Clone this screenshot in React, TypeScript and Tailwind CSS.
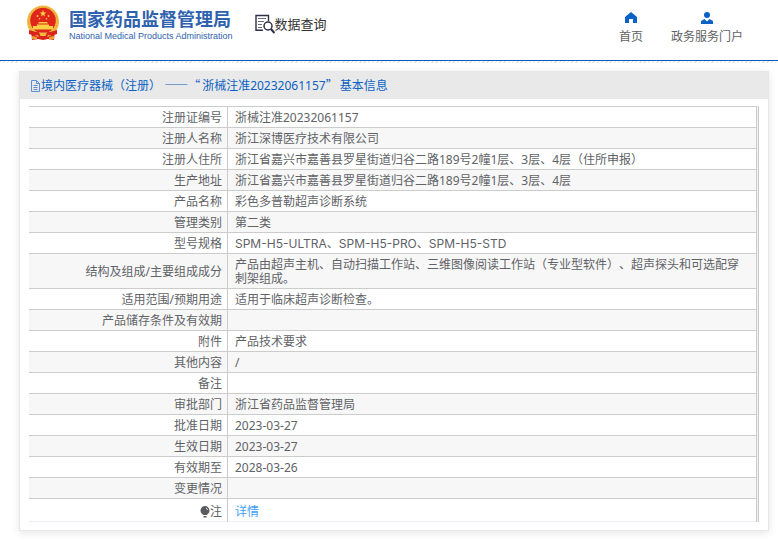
type Row = { label: string; value: string; latin?: boolean };

const rows: Row[] = [
    { label: "注册证编号", value: "浙械注准20232061157" },
    { label: "注册人名称", value: "浙江深博医疗技术有限公司" },
    { label: "注册人住所", value: "浙江省嘉兴市嘉善县罗星街道归谷二路189号2幢1层、3层、4层（住所申报）" },
    { label: "生产地址", value: "浙江省嘉兴市嘉善县罗星街道归谷二路189号2幢1层、3层、4层" },
    { label: "产品名称", value: "彩色多普勒超声诊断系统" },
    { label: "管理类别", value: "第二类" },
    { label: "型号规格", value: "SPM-H5-ULTRA、SPM-H5-PRO、SPM-H5-STD", latin: true },
    { label: "结构及组成/主要组成成分", value: "产品由超声主机、自动扫描工作站、三维图像阅读工作站（专业型软件）、超声探头和可选配穿刺架组成。" },
    { label: "适用范围/预期用途", value: "适用于临床超声诊断检查。" },
    { label: "产品储存条件及有效期", value: "" },
    { label: "附件", value: "产品技术要求" },
    { label: "其他内容", value: "/" },
    { label: "备注", value: "" },
    { label: "审批部门", value: "浙江省药品监督管理局" },
    { label: "批准日期", value: "2023-03-27" },
    { label: "生效日期", value: "2023-03-27" },
    { label: "有效期至", value: "2028-03-26" },
    { label: "变更情况", value: "" },
];

const Emblem = () => (
    <svg viewBox="0 0 34 36" className="mt-[5px] h-9 w-[34px] shrink-0" aria-hidden="true">
        <path d="M5 25h24l-1 10-6-1-5 1-5-1-6 1z" fill="#d9231c" />
        <circle cx="17" cy="16.500" r="16" fill="#f0bb40" />
        <circle cx="17" cy="16.500" r="14.500" fill="none" stroke="#e9a832" strokeDasharray="2 1.500" />
        <circle cx="17" cy="15.500" r="12.800" fill="#e0251b" />
        <path d="M17 5l.9 2.400h2.500l-2 1.500.7 2.500-2.100-1.400-2.100 1.400.7-2.500-2-1.500h2.500z" fill="#f8cf45" />
        <g fill="#f8cf45">
            <circle cx="11.500" cy="11" r=".9" />
            <circle cx="22.500" cy="11" r=".9" />
            <circle cx="13.500" cy="13.800" r=".8" />
            <circle cx="20.500" cy="13.800" r=".8" />
            <path d="M13 17h8l1 1.500H12zM11 19.500h12V21h4v3.500H7V21h4z" />
        </g>
        <path d="M3 25q14 5 28 0v4q-5 2-9 1l-2 4h-6l-2-4q-4 1-9-1z" fill="#d9231c" />
        <path d="M13 27.500h8l-1.500 3.500h-5z" fill="#f0bb40" />
        <path d="M6 31l5 1v2.500L6 34zM28 31l-5 1v2.500l5-.5z" fill="#e8a030" />
    </svg>
);

const SearchDocIcon = () => (
    <svg viewBox="0 0 20 20" className="size-5 shrink-0" fill="none" stroke="#2d3047" aria-hidden="true">
        <path d="M8 16.300H1V1.500h12.500V7" strokeWidth="1.400" />
        <path d="M3 4.500h8M3 7.500h6M3 10.500h4M3 13.500h4" stroke="#6c6e80" />
        <circle cx="13" cy="12" r="4" strokeWidth="1.500" />
        <path d="M16 15l3.500 4" strokeWidth="2.200" />
    </svg>
);

const DocIcon = () => (
    <svg viewBox="0 0 11 12" className="h-3 w-[11px] shrink-0" fill="none" stroke="#5a8fd6" aria-hidden="true">
        <path d="M1.500.5h5l3 3v8h-8zM6.500.5v3h3M3.500 5.500h4M3.500 7.500h4M3.500 9.500h4" />
    </svg>
);

const BulbIcon = () => (
    <svg viewBox="0 0 10 12" className="h-3 w-2.5" fill="#5a5b60" aria-hidden="true">
        <path d="M5 0a4.500 4.500 0 0 1 3 7.800L6.800 9H3.200L2 7.800A4.500 4.500 0 0 1 5 0zM3.500 10h3v1.500h-3z" />
        <path d="M6 2q1.500.5 1.500 2" fill="none" stroke="#fff" strokeWidth=".8" />
    </svg>
);

const HomeIcon = () => (
    <svg viewBox="0 0 12 12" className="size-3" fill="#0b62c4" aria-hidden="true">
        <path d="M6 0l6 5v6H8V7H4v4H0V5z" />
    </svg>
);

const UserIcon = () => (
    <svg viewBox="0 0 12 12" className="size-3" fill="#0b62c4" aria-hidden="true">
        <circle cx="6" cy="3" r="3" />
        <path d="M0 12V9l3.500-2L6 9.500 8.500 7 12 9v3z" />
    </svg>
);

export default function App() {
    return (
        <div lang="zh-CN" className="font-['Noto_Sans','Noto_Sans_CJK_SC',sans-serif] text-xs text-[#606266] [text-spacing-trim:space-all]">
            <header className="flex h-[61px] items-start justify-between border-b border-[#0a60b8] bg-white pr-[35px] pl-[26px]">
                <div className="flex items-start">
                    <Emblem />
                    <a href="#" className="ml-[9px] block pt-2 text-[#2f62ae]">
                        <div className="text-[18px] leading-[22px] font-bold">国家药品监督管理局</div>
                        <div className="font-['Liberation_Sans',sans-serif] text-[9px] leading-3">National Medical Products Administration</div>
                    </a>
                    <div className="ml-[22px] flex items-center pt-3 text-[13px] leading-6 text-[#333]">
                        <SearchDocIcon />
                        数据查询
                    </div>
                </div>
                <nav className="flex gap-7 pt-3 leading-4">
                    <a href="#" className="flex flex-col items-center gap-[5px]">
                        <HomeIcon />
                        首页
                    </a>
                    <a href="#" className="flex flex-col items-center gap-[5px]">
                        <UserIcon />
                        政务服务门户
                    </a>
                </nav>
            </header>
            <div className="h-0.5 bg-[repeating-linear-gradient(135deg,#e2e2e2_0_1px,#fff_1px_3px)]" />
            <main className="mt-2 mr-[9px] mb-3 ml-[19px] border border-[#e6e7ea] bg-white shadow-[0_2px_8px_rgba(0,0,0,0.1)]">
                <h1 className="flex h-[27px] items-center bg-[#e9e9e9] px-2.5 text-xs text-[#0b62c4]">
                    <DocIcon />
                    <span>
                        境内医疗器械（注册） <span className="mr-0.5 font-['Noto_Sans_CJK_SC',sans-serif]">——“</span>
                        浙械注准20232061157<span className="mr-0.5 font-['Noto_Sans_CJK_SC',sans-serif]">”</span>基本信息
                    </span>
                </h1>
                <div className="px-[9px] pt-[7px] pb-2">
                    <div className="border-r border-[#ccc] bg-[#f0f0f0] pr-px">
                        <table className="w-full border-separate border-spacing-0 border-r border-[#ccc] bg-white">
                            <tbody>
                                {rows.map((row) => (
                                    <tr key={row.label} className="even:bg-[#f7f7f7]">
                                        <th scope="row" className="h-[21px] w-[199px] border-t border-r border-[#ccc] px-[5px] pt-1 pb-0.5 text-right leading-[14px] font-normal">{row.label}</th>
                                        <td className={row.latin ? "border-t border-[#ccc] pt-1 pr-3 pb-0.5 pl-[7px] font-['Inter','Noto_Sans_CJK_SC',sans-serif] leading-[14px]" : "border-t border-[#ccc] pt-1 pr-3 pb-0.5 pl-[7px] leading-[14px]"}>{row.value}</td>
                                    </tr>
                                ))}
                                <tr>
                                    <th scope="row" className="h-6 border-t border-r border-b border-[#ccc] border-b-[#ebeef5] px-[5px] pt-1.5 pb-0.5 leading-[14px] font-normal">
                                        <span className="flex items-center justify-end">
                                            <BulbIcon />注
                                        </span>
                                    </th>
                                    <td className="border-t border-b border-[#ccc] border-b-[#ebeef5] pt-1.5 pr-3 pb-0.5 pl-[7px] leading-[14px]">
                                        <a href="#" className="text-[#409eff]">详情</a>
                                    </td>
                                </tr>
                            </tbody>
                        </table>
                    </div>
                </div>
            </main>
        </div>
    );
}
